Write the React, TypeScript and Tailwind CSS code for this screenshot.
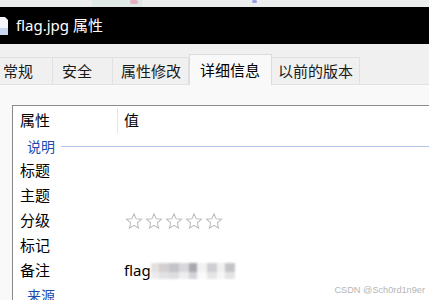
const tabs = [
  { t: '常规', w: 53, pl: 3 },
  { t: '安全', w: 60, pl: 9 },
  { t: '属性修改', w: 76, pl: 8 },
  { t: '详细信息', w: 83, pl: 10 },
  { t: '以前的版本', w: 88, pl: 6 },
]

function Star() {
  return (
    <svg width="18" height="18" viewBox="0 0 24 24" className="shrink-0">
      <path
        d="M12 2.5l2.8 6.6 7.1.6-5.4 4.7 1.6 7-6.1-3.7-6.1 3.7 1.6-7-5.4-4.7 7.1-.6z"
        fill="none"
        stroke="#bdbdbd"
        strokeWidth="1.4"
      />
    </svg>
  )
}

function Row({ label, children }: { label: string; children?: React.ReactNode }) {
  return (
    <div className="flex h-[25px] items-center">
      <span className="w-[111px] shrink-0 pl-[7px] text-[15px] text-black">{label}</span>
      <div className="flex items-center">{children}</div>
    </div>
  )
}

export default function App() {
  return (
    <div
      className="relative h-[300px] w-[429px] overflow-hidden bg-[#f9f9f9]"
      style={{ fontFamily: '"Noto Sans", "Noto Sans CJK SC", sans-serif' }}
    >
      {/* desktop strip */}
      <div className="relative h-[7px] bg-[#eceeee]">
        <div className="absolute left-[92px] top-0 h-[7px] w-[50px] bg-[#dfe9e6]" />
        <div className="absolute left-[130px] top-0 h-[4px] w-[8px] rounded-full bg-[#e8b0c0]" />
        <div className="absolute left-[252px] top-0 h-[3px] w-[5px] rounded-full bg-[#9aa0e0]" />
      </div>

      {/* title bar */}
      <div className="flex h-[37px] items-center bg-black">
        <svg width="8" height="18" viewBox="0 0 8 18" className="mr-[8px]">
          <path d="M0 0h5l3 3v15H0z" fill="#f4f6fb" />
          <path d="M0 11h8v7H0z" fill="#c9d6f0" />
        </svg>
        <span className="text-[15px] leading-none text-white">flag.jpg 属性</span>
      </div>

      {/* tabs */}
      <div className="flex h-[41px] items-end border-b border-[#e2e2e2] bg-[#f0f0f0]">
        {tabs.map((tab, i) => {
          const active = i === 3
          return (
            <div
              key={tab.t}
              style={{ width: tab.w, paddingLeft: tab.pl }}
              className={
                active
                  ? 'relative -mb-px flex h-[31px] items-center border border-b-0 border-[#dcdcdc] bg-[#f9f9f9] text-[15px] text-black'
                  : 'flex h-[27px] items-center border-r border-t border-[#e0e0e0] text-[15px] text-[#1a1a1a]'
              }
            >
              {tab.t}
            </div>
          )
        })}
      </div>

      {/* list */}
      <div className="pl-[12px] pt-[20px]">
        <div className="border-l border-t border-[#8a8a8a] bg-white">
          <div className="flex h-[28px] items-center">
            <span className="flex h-[25px] w-[105px] items-center border-r border-[#e5e5e5] pl-[7px] text-[15px] text-black">
              属性
            </span>
            <span className="pl-[6px] text-[15px] text-black">值</span>
          </div>
          <div className="flex h-[24px] items-center">
            <span className="pl-[14px] pr-[6px] text-[14px] text-[#1a4ab0]">说明</span>
            <div className="h-px flex-1 bg-[#b3c2e6]" />
          </div>
          <Row label="标题" />
          <Row label="主题" />
          <Row label="分级">
            <div className="flex gap-[2px] pl-[1px]">
              <Star />
              <Star />
              <Star />
              <Star />
              <Star />
            </div>
          </Row>
          <Row label="标记" />
          <Row label="备注">
            <span className="text-[15px] text-black">flag</span>
            <div className="flex h-[18px] flex-col justify-center blur-[1px]">
              <div className="flex h-[9px]">
                <div className="w-[8px] bg-[#e4e0e0]" />
                <div className="w-[10px] bg-[#d4d0d2]" />
                <div className="w-[10px] bg-[#c2c4ca]" />
                <div className="w-[10px] bg-[#d8d8dc]" />
                <div className="w-[8px] bg-[#a8a8ae]" />
                <div className="w-[10px] bg-[#f2f2f4]" />
                <div className="w-[10px] bg-[#cfcfd3]" />
                <div className="w-[8px] bg-[#f0f0f0]" />
                <div className="w-[10px] bg-[#c4c4c8]" />
              </div>
              <div className="flex h-[7px]">
                <div className="w-[8px] bg-[#ececec]" />
                <div className="w-[10px] bg-[#e2e2e4]" />
                <div className="w-[10px] bg-[#dcdde0]" />
                <div className="w-[10px] bg-[#eeeeef]" />
                <div className="w-[8px] bg-[#d4d4d8]" />
                <div className="w-[10px] bg-[#fafafa]" />
                <div className="w-[10px] bg-[#e6e6e8]" />
                <div className="w-[8px] bg-[#f6f6f6]" />
                <div className="w-[10px] bg-[#e4e4e6]" />
              </div>
            </div>
          </Row>
          <div className="flex h-[24px] items-center">
            <span className="pl-[14px] text-[14px] text-[#1a4ab0]">来源</span>
          </div>
        </div>
      </div>

      {/* watermark */}
      <span
        className="absolute right-[4px] top-[284px] text-[9.2px] text-[#b5b5b5]"
        style={{ fontFamily: '"Liberation Sans", sans-serif' }}
      >
        CSDN @Sch0rd1n9er
      </span>
    </div>
  )
}
